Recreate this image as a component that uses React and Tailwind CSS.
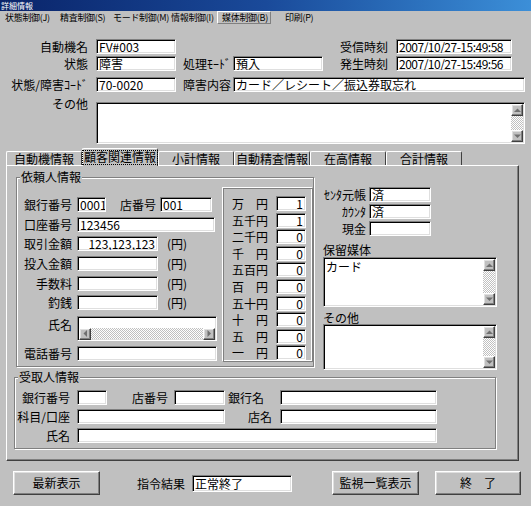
import React from 'react'

const SUNKEN =
  'bg-white border border-t-[#808080] border-l-[#808080] border-r-white border-b-white shadow-[inset_1px_1px_0_#000,inset_-1px_-1px_0_#dfdfdf]'
const RAISED =
  'border border-t-white border-l-white border-r-[#404040] border-b-[#404040] shadow-[inset_-1px_-1px_0_#808080,inset_1px_1px_0_#dfdfdf]'
const ETCHED = 'border border-[#808080] shadow-[inset_1px_1px_0_#fff,1px_1px_0_#fff]'
const DITHER = 'bg-[image:repeating-conic-gradient(#c0c0c0_0_25%,#ffffff_0_50%)] bg-[length:2px_2px]'

const TABS = ['自動機情報', '顧客関連情報', '小計情報', '自動精査情報', '在高情報', '合計情報']
const COINS = [
  ['万　円', '1'],
  ['五千円', '1'],
  ['二千円', '0'],
  ['千　円', '0'],
  ['五百円', '0'],
  ['百　円', '0'],
  ['五十円', '0'],
  ['十　円', '0'],
  ['五　円', '0'],
  ['一　円', '0'],
]

function Label({ className = '', children }) {
  return <div className={`shrink-0 whitespace-nowrap text-right leading-[15px] ${className}`}>{children}</div>
}

function Field({ className = '', h = 'h-[15px]', right, children }) {
  return (
    <div
      className={`${SUNKEN} ${h} shrink-0 overflow-hidden whitespace-nowrap px-[2px] leading-[13px] ${right ? 'text-right' : ''} ${className}`}
    >
      {children}
    </div>
  )
}

function Arrow({ dir }) {
  const vertical = dir === 'up' || dir === 'down'
  const pts = {
    up: '0,4 3.5,0.5 7,4',
    down: '0,0.5 3.5,4 7,0.5',
    left: '4,0 0.5,3.5 4,7',
    right: '0.5,0 4,3.5 0.5,7',
  }[dir]
  return (
    <div className={`${RAISED} flex h-[12px] w-[12px] shrink-0 items-center justify-center bg-[#c0c0c0]`}>
      <svg width={vertical ? 7 : 5} height={vertical ? 5 : 7} viewBox={vertical ? '0 0 7 5' : '0 0 5 7'}>
        <polygon points={pts} fill="#707070" />
      </svg>
    </div>
  )
}

function VScroll() {
  return (
    <div className="flex w-[12px] shrink-0 flex-col">
      <Arrow dir="up" />
      <div className={`flex-1 ${DITHER}`} />
      <Arrow dir="down" />
    </div>
  )
}

function TextBox({ className = '', children }) {
  return (
    <div className={`${SUNKEN} flex shrink-0 p-px ${className}`}>
      <div className="flex-1 overflow-hidden px-[1px] leading-[15px]">{children}</div>
      <VScroll />
    </div>
  )
}

function Group({ title, className = '', children }) {
  return (
    <div className={`${ETCHED} relative shrink-0 ${className}`}>
      <div className="absolute -top-[7px] left-[3px] bg-[#c0c0c0] px-[1px] leading-[12px]">{title}</div>
      {children}
    </div>
  )
}

function Button({ className = '', children }) {
  return (
    <div className={`${RAISED} flex h-[24px] shrink-0 items-center justify-center bg-[#c0c0c0] ${className}`}>
      {children}
    </div>
  )
}

export default function App() {
  return (
    <div className="flex h-[506px] w-[531px] flex-col overflow-hidden bg-[#c0c0c0] font-['Noto_Sans_CJK_JP',sans-serif] text-[12px] text-black">
      {/* title bar */}
      <div className="flex h-[11px] shrink-0 items-center bg-gradient-to-r from-[#0a246a] via-[#1a4a9a] to-[#3c8fd8] pl-[1px] text-[8px] leading-[9px] text-white">
        詳細情報
      </div>

      {/* menu */}
      <div className="flex h-[13px] shrink-0 items-center whitespace-nowrap pl-[5px] text-[9px] leading-[11px] tracking-[-0.3px]">
        <div className="w-[55px]">状態制御(J)</div>
        <div className="w-[53px]">精査制御(S)</div>
        <div className="w-[58px]">モード制御(M)</div>
        <div className="w-[46px]">情報制御(I)</div>
        <div className="flex h-[13px] w-[54px] items-center border border-t-white border-l-white border-r-[#808080] border-b-[#808080] pl-[4px]">
          媒体制御(B)
        </div>
        <div className="ml-[14px]">印刷(P)</div>
      </div>

      {/* header fields */}
      <div className="flex shrink-0 flex-col pt-[15px]">
        <div className="flex h-[15px] items-center">
          <Label className="w-[88px]">自動機名</Label>
          <Field className="ml-[8px] w-[80px]">FV#003</Field>
          <Label className="ml-[162px] w-[50px]">受信時刻</Label>
          <Field className="ml-[8px] w-[116px] tracking-[-0.5px]">2007/10/27-15:49:58</Field>
        </div>
        <div className="mt-[2px] flex h-[15px] items-center">
          <Label className="w-[88px]">状態</Label>
          <Field className="ml-[8px] w-[80px]">障害</Field>
          <Label className="ml-[7px] w-[50px] !text-left">処理ﾓｰﾄﾞ</Label>
          <Field className="w-[90px]">預入</Field>
          <Label className="ml-[15px] w-[50px]">発生時刻</Label>
          <Field className="ml-[8px] w-[116px] tracking-[-0.5px]">2007/10/27-15:49:56</Field>
        </div>
        <div className="mt-[6px] flex h-[15px] items-center">
          <Label className="w-[88px]">状態/障害ｺｰﾄﾞ</Label>
          <Field className="ml-[8px] w-[80px]">70-0020</Field>
          <Label className="ml-[7px] w-[50px] !text-left">障害内容</Label>
          <Field className="w-[292px]">カード／レシート／振込券取忘れ</Field>
        </div>
        <div className="mt-[6px] flex items-start">
          <Label className="w-[88px] !leading-[12px]">その他</Label>
          <TextBox className="ml-[8px] mt-[4px] h-[42px] w-[429px]" />
        </div>
      </div>

      {/* tabs */}
      <div className="flex h-[21px] shrink-0 items-end pl-[6px]">
        {TABS.map((t, i) =>
          i === 1 ? (
            <div
              key={t}
              className="relative z-10 -mb-px flex h-[18px] w-[76px] shrink-0 justify-center rounded-t-[2px] border-x border-t border-l-white border-t-white border-r-[#404040] bg-[#c0c0c0] pt-[2px]"
            >
              <span className="h-[13px] px-px leading-[12px] outline-1 outline-dotted outline-black">{t}</span>
            </div>
          ) : (
            <div
              key={t}
              className="flex h-[14px] w-[76px] shrink-0 justify-center rounded-t-[2px] border-x border-t border-l-white border-t-white border-r-[#404040] leading-[13px]"
            >
              {t}
            </div>
          )
        )}
      </div>

      {/* tab panel */}
      <div className="ml-[6px] flex h-[296px] w-[513px] shrink-0 flex-col border border-t-white border-l-white border-r-[#404040] border-b-[#404040] shadow-[inset_-1px_-1px_0_#808080]">
        <div className="flex items-start">
          <Group title="依頼人情報" className="ml-[9px] mt-[11px] h-[190px] w-[298px]">
            <div className="flex items-start">
              <div className="flex flex-col pl-[5px] pt-[19px]">
                <div className="flex h-[15px] items-center">
                  <Label className="w-[50px]">銀行番号</Label>
                  <Field className="ml-[5px] w-[29px]">0001</Field>
                  <Label className="w-[53px] pr-[3px]">店番号</Label>
                  <Field className="ml-[1px] w-[52px]">001</Field>
                </div>
                <div className="mt-[5px] flex h-[15px] items-center">
                  <Label className="w-[50px]">口座番号</Label>
                  <Field className="ml-[5px] w-[138px]">123456</Field>
                </div>
                <div className="mt-[4px] flex h-[15px] items-center">
                  <Label className="w-[50px]">取引金額</Label>
                  <Field className="ml-[5px] w-[81px]" right>
                    123,123,123
                  </Field>
                  <span className="ml-[9px]">(円)</span>
                </div>
                <div className="mt-[5px] flex h-[15px] items-center">
                  <Label className="w-[50px]">投入金額</Label>
                  <Field className="ml-[5px] w-[81px]" />
                  <span className="ml-[9px]">(円)</span>
                </div>
                <div className="mt-[5px] flex h-[15px] items-center">
                  <Label className="w-[50px]">手数料</Label>
                  <Field className="ml-[5px] w-[81px]" />
                  <span className="ml-[9px]">(円)</span>
                </div>
                <div className="mt-[4px] flex h-[15px] items-center">
                  <Label className="w-[50px]">釣銭</Label>
                  <Field className="ml-[5px] w-[81px]" />
                  <span className="ml-[9px]">(円)</span>
                </div>
                <div className="mt-[6px] flex items-start">
                  <Label className="w-[50px] pt-[1px]">氏名</Label>
                  <div className={`${SUNKEN} ml-[5px] flex h-[25px] w-[140px] flex-col p-px`}>
                    <div className="flex-1" />
                    <div className="flex h-[11px] shrink-0">
                      <div className="flex h-[11px] w-[12px] items-center justify-center">
                        <Arrow dir="left" />
                      </div>
                      <div className={`flex-1 ${DITHER}`} />
                      <div className="flex h-[11px] w-[12px] items-center justify-center">
                        <Arrow dir="right" />
                      </div>
                    </div>
                  </div>
                </div>
                <div className="mt-[5px] flex h-[15px] items-center">
                  <Label className="w-[50px]">電話番号</Label>
                  <Field className="ml-[5px] w-[140px]" />
                </div>
              </div>

              <div className="ml-[5px] mt-[9px] h-[175px] w-[91px] shrink-0 border border-t-white border-l-white border-r-[#808080] border-b-[#808080] shadow-[inset_1px_1px_0_#808080,inset_-1px_-1px_0_#fff] pt-[8px]">
                <div className="grid grid-rows-[repeat(10,16.6px)]">
                  {COINS.map(([label, val]) => (
                    <div key={label} className="flex items-start">
                      <div className="ml-[9px] w-[36px] shrink-0 whitespace-nowrap leading-[15px]">{label}</div>
                      <Field className="ml-[8px] w-[30px]" right>
                        {val}
                      </Field>
                    </div>
                  ))}
                </div>
              </div>
            </div>
          </Group>

          <div className="ml-[9px] mt-[21px] flex w-[174px] shrink-0 flex-col">
            <div className="flex h-[15px] items-center">
              <Label className="w-[43px]">ｾﾝﾀ元帳</Label>
              <Field className="ml-[3px] w-[62px]">済</Field>
            </div>
            <div className="mt-[2px] flex h-[15px] items-center">
              <Label className="w-[43px]">ｶｳﾝﾀ</Label>
              <Field className="ml-[3px] w-[62px]">済</Field>
            </div>
            <div className="mt-[2px] flex h-[15px] items-center">
              <Label className="w-[43px]">現金</Label>
              <Field className="ml-[3px] w-[62px]" />
            </div>
            <div className="mt-[8px] leading-[12px]">保留媒体</div>
            <TextBox className="mt-[1px] h-[50px] w-[174px]">カード</TextBox>
            <div className="mt-[5px] leading-[12px]">その他</div>
            <TextBox className="h-[46px] w-[174px]" />
          </div>
        </div>

        <Group title="受取人情報" className="ml-[7px] mt-[7px] h-[72px] w-[482px]">
          <div className="flex flex-col pt-[12px]">
            <div className="flex h-[15px] items-center">
              <Label className="w-[55px]">銀行番号</Label>
              <Field className="ml-[7px] w-[30px]" />
              <Label className="w-[61px]">店番号</Label>
              <Field className="ml-[6px] w-[51px]" />
              <Label className="w-[39px]">銀行名</Label>
              <Field className="ml-[16px] w-[157px]" />
            </div>
            <div className="mt-[4px] flex h-[15px] items-center">
              <Label className="w-[55px]">科目/口座</Label>
              <Field className="ml-[7px] w-[148px]" />
              <Label className="w-[47px]">店名</Label>
              <Field className="ml-[8px] w-[157px]" />
            </div>
            <div className="mt-[4px] flex h-[15px] items-center">
              <Label className="w-[55px]">氏名</Label>
              <Field className="ml-[7px] w-[360px]" />
            </div>
          </div>
        </Group>
      </div>

      {/* bottom buttons */}
      <div className="mt-[10px] flex h-[24px] shrink-0 items-center">
        <Button className="ml-[13px] w-[87px]">最新表示</Button>
        <Label className="ml-[37px] w-[48px]">指令結果</Label>
        <Field className="ml-[7px] w-[100px]" h="h-[17px]">
          <span className="leading-[15px]">正常終了</span>
        </Field>
        <Button className="ml-[40px] w-[87px]">監視一覧表示</Button>
        <Button className="ml-[16px] w-[86px]">終　了</Button>
      </div>
    </div>
  )
}
